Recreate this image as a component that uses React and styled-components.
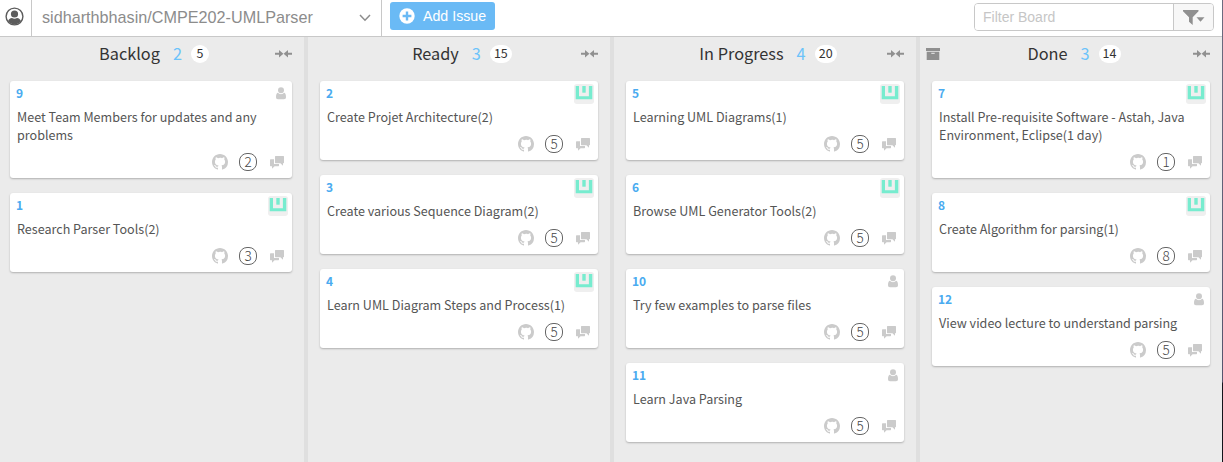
import React from "react";
import styled, { createGlobalStyle } from "styled-components";

const GlobalStyle = createGlobalStyle`
  * { box-sizing: border-box; }
  body { margin: 0; background: #ebebeb; overflow: hidden; }
`;

const sourceFont = `"Noto Sans CJK SC", "Noto Sans", sans-serif`;
const uiFont = `"Liberation Sans", Arial, sans-serif`;

const Page = styled.div`
  height: 462px;
  width: 1223px;
  display: flex;
  flex-direction: column;
  border-right: 1px solid;
  border-image: linear-gradient(#6c6c80 0, #55556e 381px, #14141c 383px) 1;
  font-family: ${sourceFont};
  color: #333;
`;

const Toolbar = styled.header`
  display: flex;
  flex: none;
  height: 37px;
  background: #fff;
  border-bottom: 1px solid #c8c8c8;
  font-family: ${uiFont};
`;

const Account = styled.div`
  width: 32px;
  padding: 7px 0 0 5px;
  border-right: 1px solid #c8c8c8;
  svg { display: block; }
`;

const RepoSelect = styled.div`
  width: 350px;
  display: flex;
  justify-content: space-between;
  padding: 0 10px 0 10px;
  border-right: 1px solid #c8c8c8;
  font-size: 16.2px;
  line-height: 35px;
  color: #8c8c8c;
  white-space: nowrap;
  svg { margin-top: 14px; }
`;

const AddButton = styled.button`
  display: flex;
  align-items: center;
  width: 105px;
  height: 28px;
  margin: 2px 0 0 8px;
  padding: 0 0 0 9px;
  gap: 8px;
  border: 0;
  border-radius: 3px;
  background: #6abaf5;
  color: #fff;
  font: 14.2px/28px ${uiFont};
  white-space: nowrap;
`;

const FilterGroup = styled.div`
  display: flex;
  width: 240px;
  height: 28px;
  margin: 3px 8px 0 auto;
  border: 1px solid #c8c8c8;
  border-radius: 4px;
  overflow: hidden;
`;

const FilterInput = styled.input`
  flex: 1;
  min-width: 0;
  border: 0;
  outline: 0;
  padding: 0 8px;
  font: 14px ${uiFont};
  &::placeholder { color: #c6c6c6; opacity: 1; }
`;

const FilterButton = styled.div`
  width: 40px;
  padding: 6px 0 0 9px;
  border-left: 1px solid #c8c8c8;
  background: #f7f7f7;
  svg { display: block; }
`;

const Board = styled.main`
  display: flex;
  flex: 1;
  min-height: 0;
`;

const Column = styled.section`
  width: ${(p) => (p.$first ? 308 : p.$last ? 302 : 306)}px;
  padding: 0 12px 0 ${(p) => (p.$first ? 10 : 12)}px;
  border-right: ${(p) => (p.$last ? 0 : 4)}px solid #dfdfdf;
`;

const ColumnHeader = styled.div`
  display: grid;
  grid-template-columns: 18px 1fr 18px;
  align-items: center;
  height: 34px;
  margin: 0 -1px 10px ${(p) => (p.$first ? 0 : -6)}px;
  svg { display: block; }
`;

const Heading = styled.div`
  display: flex;
  align-items: center;
  justify-content: center;
  white-space: nowrap;
  padding-left: ${(p) => p.$shift}px;
`;

const Title = styled.h2`
  margin: -2px 0 0;
  font-size: 16.3px;
  font-weight: 400;
  line-height: 24px;
`;

const Count = styled.span`
  margin: -2px 0 0 13px;
  font-size: 16.3px;
  line-height: 24px;
  color: #6cc3fa;
`;

const Points = styled.span`
  min-width: 18px;
  height: 18px;
  margin-left: 9px;
  padding: 0 4px;
  border-radius: 9px;
  background: #fff;
  font-size: 12.5px;
  line-height: 16px;
  text-align: center;
  ${(p) => p.$wide && "width: 22px;"}
`;

const Cards = styled.div`
  display: flex;
  flex-direction: column;
  gap: 15px;
`;

const Card = styled.article`
  padding: 3px 6px 7px;
  border-radius: 3px;
  background: #fff;
  box-shadow: 0 1px 2px rgba(0, 0, 0, 0.25);
`;

const CardTop = styled.div`
  display: flex;
  justify-content: space-between;
  height: 24px;
`;

const IssueId = styled.span`
  font-size: 12px;
  font-weight: 700;
  line-height: 17px;
  color: #4aabf0;
`;

const CardTitle = styled.p`
  margin: 0 -4px 9px 1px;
  font-size: 12.57px;
  line-height: 18px;
  color: #555;
`;

const CardFooter = styled.div`
  display: flex;
  align-items: center;
  justify-content: flex-end;
  height: 18px;
  padding-right: 2px;
`;

const Estimate = styled.span`
  width: 18px;
  height: 18px;
  margin: 0 13px 0 11px;
  border: 1px solid #666;
  border-radius: 8px;
  font-size: 13.5px;
  font-weight: 300;
  line-height: 15px;
  text-align: center;
  color: #444;
`;

const Avatar = styled.span`
  width: 20px;
  height: 20px;
  margin: 0 -2px 0 0;
  padding: 2px 1px;
  border-radius: 3px;
  background: #efefef;
  svg { display: block; }
`;

const Unassigned = styled.span`
  padding-top: 3px;
  svg { display: block; }
`;

const AccountIcon = () => (
  <svg width="19" height="19" viewBox="0 0 19 19">
    <circle cx="9.5" cy="9.5" r="8.4" fill="none" stroke="#5c5c5c" strokeWidth="1.4" />
    <circle cx="9.5" cy="7" r="3.6" fill="#5c5c5c" />
    <path d="M3 14.3c.6-2 2-3 4-3.3 1.6.9 3.4.9 5 0 2 .3 3.400 1.300 4 3.300A8.300 8.300 0 0 1 3 14.300z" fill="#5c5c5c" />
  </svg>
);

const ChevronIcon = () => (
  <svg width="12" height="8" viewBox="0 0 12 8">
    <path d="M1 1l5 5.200L11 1" fill="none" stroke="#8c8c8c" strokeWidth="1.500" />
  </svg>
);

const PlusIcon = () => (
  <svg width="16" height="16" viewBox="0 0 16 16">
    <circle cx="8" cy="8" r="7.700" fill="#fff" />
    <path d="M8 3.600v8.800M3.600 8h8.800" stroke="#6abaf5" strokeWidth="2.400" />
  </svg>
);

const FilterIcon = () => (
  <svg width="23" height="17" viewBox="0 0 23 17">
    <path d="M0 0h15.500v1.200L9.700 7.200V15L6 11.800V7.200L0 1.200z" fill="#909090" />
    <path d="M13.500 7.200h8L17.500 11.700z" fill="#909090" />
  </svg>
);

const CollapseIcon = () => (
  <svg width="17" height="8" viewBox="0 0 17 8">
    <path d="M0 2.700h4V0L8.400 3.700 4 7.400V4.700H0zM17 2.700h-4V0L8.600 3.700 13 7.400V4.700h4z" fill="#909090" />
  </svg>
);

const ArchiveIcon = () => (
  <svg width="14" height="12" viewBox="0 0 14 12">
    <path d="M0 0h14v3H0zM.7 3.700h12.600V12H.7z" fill="#8f8f8f" />
    <path d="M5.300 5.300h3.400" stroke="#ebebeb" strokeWidth="1" />
  </svg>
);

const GithubIcon = () => (
  <svg width="16" height="16" viewBox="0 0 16 16" fill="#cbcbcb">
    <path d="M8 0C3.580 0 0 3.580 0 8c0 3.540 2.290 6.530 5.470 7.590.4.070.55-.17.55-.38 0-.19-.01-.82-.01-1.490-2.010.37-2.530-.49-2.690-.94-.09-.23-.48-.94-.82-1.130-.28-.15-.68-.52-.01-.53.63-.01 1.080.58 1.230.82.72 1.210 1.870.87 2.330.66.070-.52.28-.87.51-1.070-1.780-.2-3.640-.89-3.640-3.950 0-.87.31-1.590.82-2.150-.08-.2-.36-1.020.08-2.120 0 0 .67-.21 2.200.82A7.400 7.400 0 0 1 8 3.860c.68 0 1.360.09 2 .27 1.530-1.040 2.200-.82 2.200-.82.44 1.100.16 1.920.08 2.120.51.56.82 1.270.82 2.150 0 3.070-1.870 3.750-3.650 3.950.29.25.54.73.54 1.480 0 1.070-.01 1.930-.01 2.200 0 .21.15.46.55.38A8.010 8.010 0 0 0 16 8c0-4.420-3.580-8-8-8z" />
  </svg>
);

const CommentsIcon = () => (
  <svg width="14" height="13" viewBox="0 0 14 13" fill="#cbcbcb">
    <path d="M5.600 0h7.800q.6 0 .6.600v6q0 .6-.6.600H13v2.600L10.400 7.200H5.600Q5 7.200 5 6.600v-6Q5 0 5.600 0z" />
    <path d="M.6 3.300H4V8h5v1.600q0 .6-.6.600H4.600L2 12.800v-2.600H.6Q0 10.200 0 9.600V3.900q0-.6.6-.6z" />
  </svg>
);

const PersonIcon = () => (
  <svg width="10" height="13" viewBox="0 0 10 13" fill="#cbcbcb">
    <circle cx="5" cy="3.300" r="3" />
    <path d="M1.800 5.800a4.500 4.500 0 0 0 6.400 0C9.500 6.200 10 7.800 10 10c0 1.300-.7 2.300-2 2.300H2C.7 12.300 0 11.300 0 10c0-2.200.5-3.800 1.800-4.200z" />
  </svg>
);

const IdenticonIcon = () => (
  <svg width="18" height="14" viewBox="0 0 18 14">
    <path d="M.7 0h3.300v10.200h9.900V0h3.400v13.200H.7z" fill="#77eccf" />
    <path d="M7.300 0h3.400v6.700H7.300z" fill="#77eccf" />
  </svg>
);

const columns = [
  {
    name: "Backlog", points: 5, shift: 5,
    issues: [
      { id: 9, title: "Meet Team Members for updates and any problems", estimate: 2 },
      { id: 1, title: "Research Parser Tools(2)", estimate: 3, assigned: true },
    ],
  },
  {
    name: "Ready", points: 15, shift: 11,
    issues: [
      { id: 2, title: "Create Projet Architecture(2)", estimate: 5, assigned: true },
      { id: 3, title: "Create various Sequence Diagram(2)", estimate: 5, assigned: true },
      { id: 4, title: "Learn UML Diagram Steps and Process(1)", estimate: 5, assigned: true },
    ],
  },
  {
    name: "In Progress", points: 20, shift: 11,
    issues: [
      { id: 5, title: "Learning UML Diagrams(1)", estimate: 5, assigned: true },
      { id: 6, title: "Browse UML Generator Tools(2)", estimate: 5, assigned: true },
      { id: 10, title: "Try few examples to parse files", estimate: 5 },
      { id: 11, title: "Learn Java Parsing", estimate: 5 },
    ],
  },
  {
    name: "Done", points: 14, shift: 11, archive: true,
    issues: [
      { id: 7, title: "Install Pre-requisite Software - Astah, Java Environment, Eclipse(1 day)", estimate: 1, assigned: true },
      { id: 8, title: "Create Algorithm for parsing(1)", estimate: 8, assigned: true },
      { id: 12, title: "View video lecture to understand parsing", estimate: 5 },
    ],
  },
];

function IssueCard({ issue }) {
  return (
    <Card>
      <CardTop>
        <IssueId>{issue.id}</IssueId>
        {issue.assigned ? <Avatar><IdenticonIcon /></Avatar> : <Unassigned><PersonIcon /></Unassigned>}
      </CardTop>
      <CardTitle>{issue.title}</CardTitle>
      <CardFooter>
        <GithubIcon />
        <Estimate>{issue.estimate}</Estimate>
        <CommentsIcon />
      </CardFooter>
    </Card>
  );
}

export default function App() {
  return (
    <Page>
      <GlobalStyle />
      <Toolbar>
        <Account><AccountIcon /></Account>
        <RepoSelect>sidharthbhasin/CMPE202-UMLParser<ChevronIcon /></RepoSelect>
        <AddButton><PlusIcon />Add Issue</AddButton>
        <FilterGroup>
          <FilterInput placeholder="Filter Board" />
          <FilterButton><FilterIcon /></FilterButton>
        </FilterGroup>
      </Toolbar>
      <Board>
        {columns.map((column, i) => (
          <Column key={column.name} $first={i === 0} $last={i === columns.length - 1}>
            <ColumnHeader $first={i === 0}>
              <span>{column.archive && <ArchiveIcon />}</span>
              <Heading $shift={column.shift}>
                <Title>{column.name}</Title>
                <Count>{column.issues.length}</Count>
                <Points $wide={column.points > 9}>{column.points}</Points>
              </Heading>
              <CollapseIcon />
            </ColumnHeader>
            <Cards>
              {column.issues.map((issue) => <IssueCard key={issue.id} issue={issue} />)}
            </Cards>
          </Column>
        ))}
      </Board>
    </Page>
  );
}
